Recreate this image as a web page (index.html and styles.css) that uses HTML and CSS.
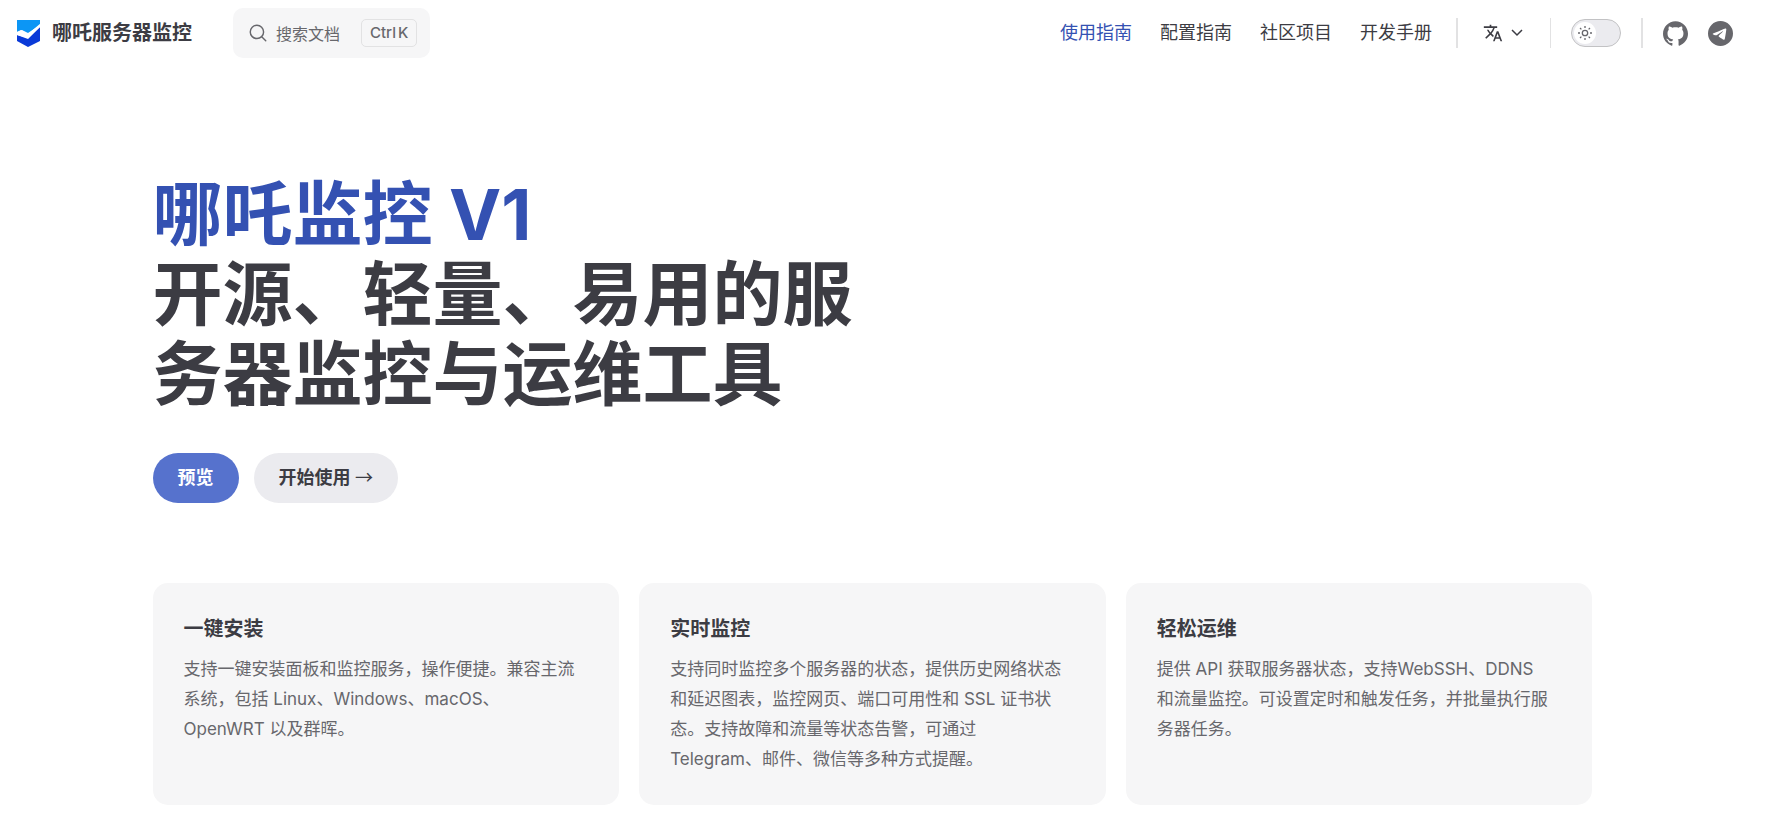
FILE: index.html
```html
<!DOCTYPE html>
<html lang="zh-CN">
<head>
    <meta charset="UTF-8">
    <meta name="viewport" content="width=device-width, initial-scale=1.0">
    <title>哪吒服务器监控</title>
    <link rel="stylesheet" href="styles.css">
</head>
<body>

    <header class="navbar">
        <a class="brand" href="#">
            <svg class="brand-logo" viewBox="0 0 24 28" aria-hidden="true">
                <path fill="#0c96f5" d="M0 1h23v5L11 14 5 11 0 13z"/>
                <path fill="#0a3ad8" d="M0 16l11 3L23 8v14l-12 6L0 22z"/>
                <path fill="#fff" d="M0 13l4-2 7 4L24 4v3L11 20 0 16z"/>
            </svg>
            <span>哪吒服务器监控</span>
        </a>

        <button class="search" type="button">
            <svg class="search-icon" viewBox="0 0 20 20" aria-hidden="true">
                <path d="M14.4 14.4 18.6 18.6M16.2 8.8a7.4 7.4 0 1 1-14.8 0 7.4 7.4 0 0 1 14.8 0z"/>
            </svg>
            <span class="search-text">搜索文档</span>
            <span class="search-key"><kbd>Ctrl</kbd><kbd>K</kbd></span>
        </button>

        <nav class="menu">
            <a class="menu-link active" href="#">使用指南</a>
            <a class="menu-link" href="#">配置指南</a>
            <a class="menu-link" href="#">社区项目</a>
            <a class="menu-link" href="#">开发手册</a>
        </nav>

        <button class="lang" type="button" aria-label="切换语言">
            <svg class="lang-icon" viewBox="0 0 24 24" aria-hidden="true">
                <path d="M12.87 15.07l-2.54-2.51.03-.03A17.5 17.5 0 0 0 14.07 6H17V4h-7V2H8v2H1v2h11.17C11.5 7.92 10.44 9.75 9 11.35 8.07 10.32 7.3 9.19 6.69 8h-2c.73 1.63 1.73 3.17 2.98 4.56l-5.09 5.02L4 19l5-5 3.11 3.11.76-2.04zM18.5 10h-2L12 22h2l1.12-3h4.75L21 22h2l-4.5-12zm-2.62 7l1.62-4.33L19.12 17h-3.24z"/>
            </svg>
            <svg class="chevron" viewBox="0 0 12 8" aria-hidden="true">
                <path d="M1 1l5 5 5-5"/>
            </svg>
        </button>

        <div class="appearance">
            <button class="switch" type="button" role="switch" aria-checked="false" aria-label="切换深色模式">
                <span class="switch-knob">
                    <svg class="sun" viewBox="0 0 16 16" aria-hidden="true">
                        <circle cx="8" cy="8" r="2.7"/>
                        <path d="M8 1v2M8 13v2M1 8h2M13 8h2M3 3l1.4 1.4M11.6 11.6 13 13M3 13l1.4-1.4M11.6 4.4 13 3"/>
                    </svg>
                </span>
            </button>
        </div>

        <div class="social">
            <a href="#" aria-label="GitHub">
                <svg viewBox="0 0 24 24" aria-hidden="true">
                    <path d="M12 .297c-6.63 0-12 5.373-12 12 0 5.303 3.438 9.8 8.205 11.385.6.113.82-.258.82-.577 0-.285-.01-1.04-.015-2.04-3.338.724-4.042-1.61-4.042-1.61C4.422 18.07 3.633 17.7 3.633 17.7c-1.087-.744.084-.729.084-.729 1.205.084 1.838 1.236 1.838 1.236 1.07 1.835 2.809 1.305 3.495.998.108-.776.417-1.305.76-1.605-2.665-.3-5.466-1.332-5.466-5.93 0-1.31.465-2.38 1.235-3.22-.135-.303-.54-1.523.105-3.176 0 0 1.005-.322 3.3 1.23.96-.267 1.98-.399 3-.405 1.02.006 2.04.138 3 .405 2.28-1.552 3.285-1.23 3.285-1.23.645 1.653.24 2.873.12 3.176.765.84 1.23 1.91 1.23 3.22 0 4.61-2.805 5.625-5.475 5.92.42.36.81 1.096.81 2.22 0 1.606-.015 2.896-.015 3.286 0 .315.21.69.825.57C20.565 22.092 24 17.592 24 12.297c0-6.627-5.373-12-12-12"/>
                </svg>
            </a>
            <a href="#" aria-label="Telegram">
                <svg viewBox="0 0 24 24" aria-hidden="true">
                    <path d="M11.944 0A12 12 0 0 0 0 12a12 12 0 0 0 12 12 12 12 0 0 0 12-12A12 12 0 0 0 12 0a12 12 0 0 0-.056 0zm4.962 7.224c.1-.002.321.023.465.14a.506.506 0 0 1 .171.325c.016.093.036.306.02.472-.18 1.898-.962 6.502-1.36 8.627-.168.9-.499 1.201-.82 1.23-.696.065-1.225-.46-1.9-.902-1.056-.693-1.653-1.124-2.678-1.8-1.185-.78-.417-1.21.258-1.91.177-.184 3.247-2.977 3.307-3.23.007-.032.014-.15-.056-.212s-.174-.041-.249-.024c-.106.024-1.793 1.14-5.061 3.345-.48.33-.913.49-1.302.48-.428-.008-1.252-.241-1.865-.44-.752-.245-1.349-.374-1.297-.789.027-.216.325-.437.893-.663 3.498-1.524 5.83-2.529 6.998-3.014 3.332-1.386 4.025-1.627 4.476-1.635z"/>
                </svg>
            </a>
        </div>
    </header>

    <main class="home">
        <section class="hero">
            <h1 class="hero-title">
                <span class="hero-name">哪吒监控 V1</span>
                <span class="hero-text">开源、轻量、易用的服务器监控与运维工具</span>
            </h1>
            <div class="actions">
                <a class="btn btn-brand" href="#">预览</a>
                <a class="btn btn-alt" href="#">开始使用 <span class="arrow">→</span></a>
            </div>
        </section>

        <section class="features">
            <article class="card">
                <h2>一键安装</h2>
                <p>支持一键安装面板和监控服务，操作便捷。兼容主流系统，包括 Linux、Windows、macOS、<br>OpenWRT 以及群晖。</p>
            </article>
            <article class="card">
                <h2>实时监控</h2>
                <p>支持同时监控多个服务器的状态，提供历史网络状态和延迟图表，监控网页、端口可用性和 SSL 证书状<br>态。支持故障和流量等状态告警，可通过<br>Telegram、邮件、微信等多种方式提醒。</p>
            </article>
            <article class="card">
                <h2>轻松运维</h2>
                <p>提供 API 获取服务器状态，支持WebSSH、DDNS<br>和流量监控。可设置定时和触发任务，并批量执行服务器任务。</p>
            </article>
        </section>
    </main>

</body>
</html>
```
FILE: styles.css
```css
* {
    box-sizing: border-box;
}

body {
    margin: 0;
    padding-right: 27px;
    background-color: #fff;
    color: #3c3c43;
    font-family: Inter, "Noto Sans CJK SC", sans-serif;
    font-size: 17px;
    line-height: 30px;
}

a {
    color: inherit;
    text-decoration: none;
}

button {
    font-family: inherit;
    color: inherit;
    border: none;
    cursor: pointer;
}

/* navbar */
.navbar {
    display: flex;
    align-items: center;
    height: 66px;
    padding: 0 12px 0 17px;
}

.brand {
    display: flex;
    align-items: center;
    gap: 11px;
    font-size: 20px;
    font-weight: 600;
}

.brand-logo {
    width: 24px;
    height: 28px;
}

.search {
    display: flex;
    align-items: center;
    height: 50px;
    margin-left: 41px;
    padding: 0 13px 0 16px;
    border-radius: 10px;
    background-color: #f6f6f7;
    color: #67676c;
}

.search-icon {
    width: 18px;
    height: 18px;
    fill: none;
    stroke: #67676c;
    stroke-width: 1.6;
    stroke-linecap: round;
}

.search-text {
    margin: 0 21px 0 9px;
    font-size: 16px;
}

.search-key {
    display: flex;
    gap: 2px;
    height: 28px;
    padding: 0 8px;
    border: 1px solid #e2e2e3;
    border-radius: 5px;
    font-size: 15px;
    font-weight: 500;
    line-height: 26px;
}

.search-key kbd {
    font-family: inherit;
    font-size: inherit;
}

.menu {
    display: flex;
    margin-left: auto;
}

.menu-link {
    padding: 0 14px;
    font-size: 18px;
}

.menu-link.active {
    color: #3451b2;
}

.lang,
.appearance,
.social {
    display: flex;
    align-items: center;
    height: 30px;
    border-left: 2px solid #e2e2e3;
}

.lang {
    gap: 8px;
    margin-left: 10px;
    padding: 0 27px 0 25px;
    background: none;
}

.lang-icon {
    width: 20px;
    height: 20px;
    fill: #3c3c43;
}

.chevron {
    width: 12px;
    height: 8px;
    fill: none;
    stroke: #3c3c43;
    stroke-width: 1.5;
}

.appearance {
    padding: 0 20px;
    border-left-width: 1px;
}

.switch {
    width: 50px;
    height: 28px;
    padding: 2px;
    border: 1px solid #c2c2c4;
    border-radius: 14px;
    background-color: #ebebef;
}

.switch-knob {
    display: flex;
    align-items: center;
    justify-content: center;
    width: 22px;
    height: 22px;
    border-radius: 50%;
    background-color: #fff;
}

.sun {
    width: 16px;
    height: 16px;
    fill: none;
    stroke: #67676c;
    stroke-width: 1.3;
}

.social {
    gap: 20px;
    padding-left: 20px;
}

.social svg {
    display: block;
    width: 25px;
    height: 25px;
    fill: #67676c;
}

/* home */
.home {
    max-width: 1440px;
    margin: 0 auto;
}

.hero {
    padding: 109px 0 80px;
}

.hero-title {
    max-width: 720px;
    margin: 0;
    font-size: 70px;
    font-weight: 700;
    line-height: 80px;
}

.hero-title span {
    display: block;
}

.hero-name {
    color: #3451b2;
}

.actions {
    display: flex;
    gap: 15px;
    margin-top: 38px;
}

.btn {
    height: 50px;
    padding: 0 25px;
    border-radius: 25px;
    font-size: 18px;
    font-weight: 600;
    line-height: 50px;
}

.btn-brand {
    background-color: #5672cd;
    color: #fff;
}

.btn-alt {
    background-color: #ebebef;
}

.arrow {
    font-family: "Noto Sans CJK SC", sans-serif;
    font-weight: 400;
    line-height: 1;
}

.features {
    display: grid;
    grid-template-columns: repeat(3, 1fr);
    gap: 20px;
}

.card {
    padding: 31px;
    border-radius: 15px;
    background-color: #f6f6f7;
}

.card h2 {
    margin: 0;
    font-size: 20px;
    font-weight: 600;
    line-height: 30px;
}

.card p {
    margin: 10px 0 0;
    color: #67676c;
}
```
